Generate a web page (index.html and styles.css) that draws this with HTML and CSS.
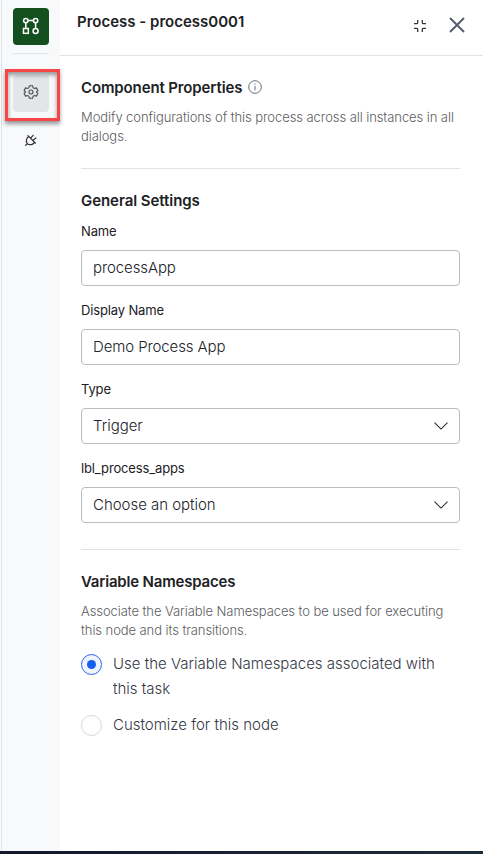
FILE: index.html
```html
<!DOCTYPE html>
<html lang="en">
<head>
<meta charset="utf-8">
<title>Process - process0001</title>
<link rel="stylesheet" href="styles.css">
</head>
<body>
<div class="app">
  <nav class="rail">
    <div class="tile brand">
      <svg width="18" height="18" viewBox="0 0 18 18" fill="none" stroke="#fff" stroke-width="1.5"><circle cx="3.8" cy="3.6" r="2.2"/><circle cx="13.6" cy="3.6" r="2.2"/><rect x="1.5" y="11.5" width="4.8" height="4.8"/><circle cx="13.6" cy="13.9" r="2.5"/><path d="M6 3.6h5.4M3.8 5.8v5.7M13.6 5.8v5.6"/></svg>
    </div>
    <hr class="rail-line">
    <div class="tile settings">
      <svg width="16" height="16" viewBox="0 0 24 24" fill="none" stroke="#454b55" stroke-width="1.6" stroke-linejoin="round"><path d="M9.7 2.5h4.6l.8 3 2 1.1 3-.8 2.3 4-2.2 2.200 2.200 2.200-2.300 4-3-.8-2 1.100-.8 3H9.700l-.8-3-2-1.100-3 .8-2.300-4L3.800 12 1.600 9.800l2.300-4 3 .8 2-1.100z"/><circle cx="12" cy="12" r="3"/></svg>
    </div>
    <svg class="plug" width="14" height="14" viewBox="0 0 14 14" fill="none" stroke="#302f32" stroke-width="1.2" stroke-linecap="round" stroke-linejoin="round"><path d="M4 2.700l7.300 7.300M4.700 3.400C2.300 5 1.600 8.300 3.300 10.700 5.700 12.400 9 11.700 10.600 9.300M3.300 10.700L1.600 12.400M6.600 5.200L9.200 2.300M8.800 7.400L11.900 5"/></svg>
  </nav>
  <main class="panel">
    <header class="top">
      <h1>Process - process0001</h1>
      <svg class="collapse" width="14" height="14" viewBox="0 0 14 14" fill="none" stroke="#343741" stroke-width="1.3"><path d="M1 4.700h2.700q1 0 1-1V1M9.300 1v2.700q0 1 1 1H13M1 9.300h2.700q1 0 1 1V13M9.300 13v-2.700q0-1 1-1H13"/></svg>
      <svg class="close" width="16" height="16" viewBox="0 0 16 16" fill="none" stroke="#535b69" stroke-width="1.9"><path d="M1 1l14 14M15 1L1 15"/></svg>
    </header>
    <section class="intro">
      <div class="title-row"><h2>Component Properties</h2><svg width="14" height="14" viewBox="0 0 14 14" fill="none" stroke="#646c79"><circle cx="7" cy="7" r="6.300"/><path d="M7 6v4.300M7 3.500v1.200"/></svg></div>
      <p class="desc">Modify configurations of this process across all instances in all<br>dialogs.</p>
    </section>
    <section class="general">
      <h2>General Settings</h2>
      <label class="field"><span>Name</span><span class="control">processApp</span></label>
      <label class="field"><span>Display Name</span><span class="control">Demo Process App</span></label>
      <label class="field"><span>Type</span><span class="control pick">Trigger<svg width="14" height="8" viewBox="0 0 14 8" fill="none" stroke="#272b33" stroke-width="1.100"><path d="M.5 .7L7 7.100 13.500 .7"/></svg></span></label>
      <label class="field"><span>lbl_process_apps</span><span class="control pick">Choose an option<svg width="14" height="8" viewBox="0 0 14 8" fill="none" stroke="#272b33" stroke-width="1.100"><path d="M.5 .7L7 7.100 13.500 .7"/></svg></span></label>
    </section>
    <section class="names">
      <h2>Variable Namespaces</h2>
      <p class="desc">Associate the Variable Namespaces to be used for executing<br>this node and its transitions.</p>
      <div class="option"><i class="radio on"></i><span>Use the Variable Namespaces associated with<br>this task</span></div>
      <div class="option"><i class="radio"></i><span>Customize for this node</span></div>
    </section>
  </main>
</div>
<footer class="edge"></footer>
</body>
</html>
```
FILE: styles.css
```css
*, *::after { box-sizing: border-box; }
body { margin: 0; height: 854px; overflow: hidden; background: #fff; color: #202124; font-family: Inter, "Liberation Sans", sans-serif; display: flex; flex-direction: column; }
h1, h2, p { margin: 0; white-space: nowrap; }
.app { display: flex; flex: 1; }
.rail { width: 60px; background: #f8f9fb; box-shadow: inset 1px 0 #fafafa, inset 2px 0 #dfe2e7; display: flex; flex-direction: column; align-items: center; padding: 8px 0 0 2px; }
.tile { width: 36px; height: 37px; border-radius: 4px; display: flex; align-items: center; justify-content: center; position: relative; }
.brand { background: #14501f; padding-bottom: 2px; }
.rail-line { width: 36px; height: 1px; border: 0; background: #e2e4e7; margin: 8px 0 21px; }
.settings { background: #e4e5e7; padding-bottom: 3px; }
.settings::after { content: ""; position: absolute; left: -8px; top: -6px; width: 55px; height: 52px; border: 3px solid #f64646; box-shadow: 0 3px 4px rgba(0,0,0,.4), inset 0 3px 4px rgba(0,0,0,.4); }
.plug { margin-top: 21px; }
.panel { flex: 1; min-width: 0; }
.top { height: 56px; border-bottom: 1px solid #e1e2e4; display: flex; padding: 0 18px 0 17px; }
h1 { font-size: 15px; line-height: 20px; font-weight: 600; padding-top: 12px; flex: 1; }
.collapse { margin: 19px 22px 0 0; }
.close { margin-top: 17px; }
section { margin: 0 23px 0 21px; }
h2 { font-size: 15px; line-height: 20px; font-weight: 600; letter-spacing: -.12px; }
.intro { height: 113px; padding-top: 22px; border-bottom: 1px solid #e1e2e4; }
.title-row { display: flex; gap: 6px; }
.title-row svg { margin-top: 2px; }
.desc { font-size: 13px; line-height: 19px; color: #5c5d62; font-weight: 300; letter-spacing: -.075px; }
.intro .desc { margin-top: 10px; }
.general { height: 381px; padding-top: 22px; border-bottom: 1px solid #e1e2e4; }
.general h2 { letter-spacing: -.06px; }
.names h2 { letter-spacing: -.19px; }
.field { display: block; height: 79px; font-size: 13px; line-height: 18px; padding-top: 11px; letter-spacing: -.14px; }
.field > span:first-child { display: block; height: 28px; }
.control { height: 36px; border: 1px solid #bbbcc2; border-radius: 4px; padding: 0 11px; display: flex; align-items: center; justify-content: space-between; font-size: 15px; color: #202329; font-weight: 300; letter-spacing: -.1px; }
.pick { padding-right: 11px; letter-spacing: -.03px; }
.names { padding-top: 22px; }
.names .desc { margin-top: 10px; }
.option { display: flex; gap: 11px; font-size: 15px; line-height: 25px; color: #343844; font-weight: 300; white-space: nowrap; margin-top: 11px; }
.option span { margin-top: -1px; margin-bottom: 1px; }
.desc + .option { margin-top: 12px; }
.radio { width: 21px; height: 21px; flex: none; border: 1px solid #d4d7dc; border-radius: 50%; margin-top: 2px; display: flex; align-items: center; justify-content: center; }
.radio.on { border-color: #2463eb; background: #eff4ff; }
.radio.on::after { content: ""; width: 9px; height: 9px; border-radius: 50%; background: #155eef; }
.edge { height: 3px; background: linear-gradient(90deg, #14172d, #1c2b39); }
```
